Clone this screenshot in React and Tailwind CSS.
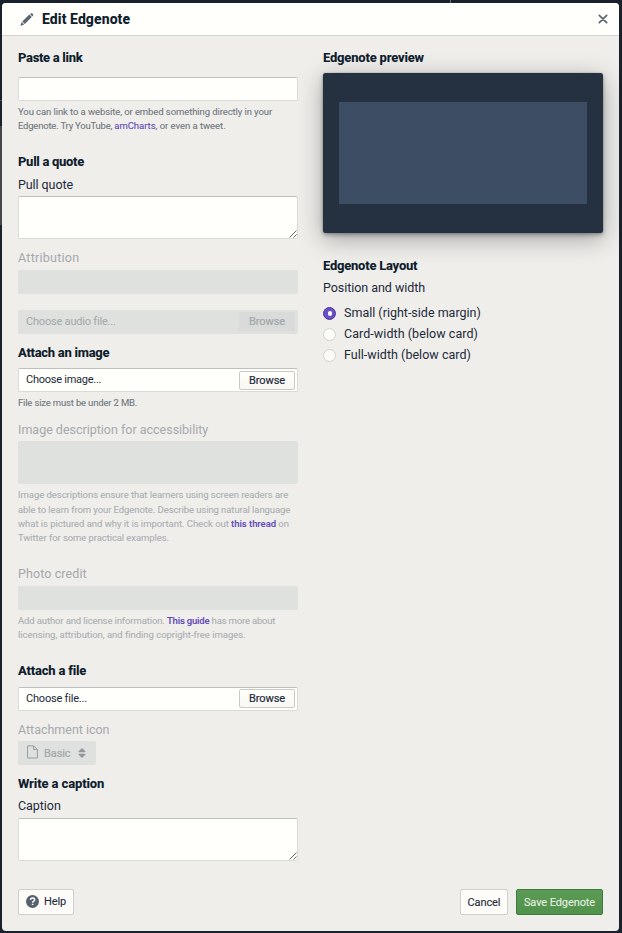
import React from "react";

const cx = (...c) => c.filter(Boolean).join(" ");

function Heading({ children, className }) {
  return <h2 className={cx("h-5 text-[13px] leading-5 font-extrabold text-[#0f1d2e] whitespace-nowrap", className)}>{children}</h2>;
}

function Label({ children, className, disabled }) {
  return (
    <div className={cx("h-[18px] text-[12.5px] leading-[18px] whitespace-nowrap", disabled ? "text-[#a5a9ad]" : "text-[#1c2a3a]", className)}>
      {children}
    </div>
  );
}

function HelpLine({ children, className, disabled }) {
  return (
    <div className={cx("text-[9.5px] leading-[14px] whitespace-nowrap [-webkit-text-stroke:0.1px]", disabled ? "text-[#aaafb2]" : "text-[#6f7881]", className)}>
      {children}
    </div>
  );
}

function Link({ children, className }) {
  return <a className={cx("text-[#6249b8]", className)}>{children}</a>;
}

const fieldLook = "rounded-[2px] border border-[#dadbd8] border-t-[#bfc0be] bg-[#fffffb]";

function TextArea({ className }) {
  return (
    <div className={cx("h-[43px] flex items-end justify-end", fieldLook, className)}>
      <svg width="8" height="8" viewBox="0 0 8 8" stroke="#55585a" strokeWidth="0.9" fill="none">
        <path d="M0.5 7.5 L7.5 0.5 M4.5 7.5 L7.5 4.5" />
      </svg>
    </div>
  );
}

function FileInput({ text, textClass, disabled, className, raised }) {
  return (
    <div
      className={cx(
        "h-6 flex items-start justify-between pl-[7px] pr-[2px] text-[11px]",
        disabled ? "rounded-[2px] border border-transparent bg-[#dfe1de] text-[#a0a7a9]" : cx(fieldLook, "text-[#1c2a3a]"),
        className
      )}
    >
      <span className={cx("mt-1 leading-[14px] whitespace-nowrap", textClass)}>{text}</span>
      <span
        className={cx(
          "h-[19px] w-14 rounded-[2px] border text-center leading-[17px] tracking-[-0.1px] [-webkit-text-stroke:0.2px]",
          raised ? "mt-[2px]" : "mt-px",
          disabled ? "border-transparent bg-[#d8dbd9]" : "border-[#cacbc8] bg-linear-to-b from-[#fffffc] to-[#f8f7f4]"
        )}
      >
        Browse
      </span>
    </div>
  );
}

function Radio({ children, checked, className }) {
  return (
    <div className="flex h-[21px] items-center">
      <span
        className={cx(
          "flex size-[13px] shrink-0 items-center justify-center rounded-full border",
          checked ? "border-[#4b3a97] bg-[#6a50c7]" : "border-[#d2d2cf] bg-[#fbfbf8]"
        )}
      >
        {checked && <span className="h-[5px] w-1 rounded-full bg-white" />}
      </span>
      <span className={cx("ml-2 pb-[2px] text-[12.5px] leading-[18px] whitespace-nowrap text-[#1c2a3a]", className)}>{children}</span>
    </div>
  );
}

export default function App() {
  return (
    <div className="h-[933px] w-[622px] overflow-hidden bg-[#18212c] bg-[linear-gradient(#454748,#454748),linear-gradient(#6c7070,#6c7070),linear-gradient(#4a5058,#4a5058)] bg-[length:2px_99px,1px_3px,2px_1px] bg-[position:0_126px,450px_0,0_100px] bg-no-repeat pt-[3px] pr-[3px] pb-[2px] pl-[2px] font-['Roboto','Liberation_Sans',sans-serif]">
      <div className="flex h-[928px] flex-col overflow-hidden rounded-[4px] bg-[#f0eeeb]">
        <header className="flex h-[33px] shrink-0 items-center border-b border-[#d3d3d0] bg-[#fffffb] pr-[11px] pl-[18px]">
          <svg width="14" height="14" viewBox="0 0 14 14" fill="#5c6672" className="mt-px">
            <path d="M10.1 1 L11.2 .3 Q12 0 12.9 .9 Q13.7 1.9 13.1 2.6 L12.2 3.4 Z M9.3 1.6 L11.8 4.1 L4.7 10.9 L2.3 8.5 Z M1.7 9 L4.2 11.4 L.4 12.9 Z" />
          </svg>
          <h1 className="ml-2 -mt-px grow text-[14px] leading-5 font-extrabold tracking-[0.09px] text-[#0f1d2e]">Edit Edgenote</h1>
          <svg width="10" height="10" viewBox="0 0 10 10" stroke="#5c6672" strokeWidth="1.7" strokeLinecap="round">
            <path d="M1.3 1.3 L8.7 8.7 M8.7 1.3 L1.3 8.7" />
          </svg>
        </header>

        <main className="flex gap-[25px] px-4 pt-3">
          <section className="w-[280px]">
            <Heading className="tracking-[-0.32px]">Paste a link</Heading>
            <div className={cx("mt-[9px] h-6", fieldLook)} />
            <HelpLine className="mt-1 tracking-[-0.09px]">You can link to a website, or embed something directly in your</HelpLine>
            <HelpLine className="tracking-[-0.04px]">
              <span className="tracking-[-0.21px]">Edgenote. Try YouTube, </span><Link>amCharts</Link>, or even a tweet.
            </HelpLine>

            <Heading className="mt-[19px] tracking-[-0.3px]">Pull a quote</Heading>
            <Label className="mt-1 tracking-[-0.08px]">Pull quote</Label>
            <TextArea className="mt-[2px]" />
            <Label disabled className="mt-[10px] tracking-[0.25px]">Attribution</Label>
            <div className="mt-[3px] h-6 rounded-[2px] bg-[#dfe1de]" />
            <FileInput disabled text="Choose audio file..." textClass="tracking-[-0.2px]" className="mt-4" />

            <Heading className="mt-[9px] tracking-[-0.28px]">Attach an image</Heading>
            <FileInput raised text="Choose image..." textClass="tracking-[-0.25px]" className="mt-[5px]" />
            <HelpLine className="mt-1 tracking-[-0.17px]">File size must be under 2 MB.</HelpLine>
            <Label disabled className="mt-[11px] tracking-[-0.01px]">Image description for accessibility</Label>
            <div className="mt-[2px] h-[43px] rounded-[2px] bg-[#dfe1de]" />
            <HelpLine disabled className="mt-1 tracking-[-0.05px]">Image descriptions ensure that learners using screen readers are</HelpLine>
            <HelpLine disabled className="mt-px tracking-[-0.08px]">able to learn from your Edgenote. Describe using natural language</HelpLine>
            <HelpLine disabled className="tracking-[-0.04px]">
              what is pictured and why it is important. Check out <Link className="font-medium">this thread</Link> on
            </HelpLine>
            <HelpLine disabled className="tracking-[-0.09px]">Twitter for some practical examples.</HelpLine>

            <Label disabled className="mt-[20px] tracking-[0.1px]">Photo credit</Label>
            <div className="mt-[3px] h-6 rounded-[2px] bg-[#dfe1de]" />
            <HelpLine disabled className="mt-1 tracking-[-0.18px]">
              <span className="tracking-[-0.12px]">Add author and license information. </span><Link className="font-medium">This guide</Link> has more about
            </HelpLine>
            <HelpLine disabled className="tracking-[-0.03px]">licensing, attribution, and finding copright-free images.</HelpLine>

            <Heading className="mt-[19px] tracking-[-0.2px]">Attach a file</Heading>
            <FileInput text="Choose file..." textClass="tracking-[-0.2px]" className="mt-[6px]" />
            <Label disabled className="mt-[10px] tracking-[-0.02px]">Attachment icon</Label>
            <div className="mt-[2px] flex h-6 w-[78px] items-center rounded-[2px] bg-[#dfe1de] pl-[9px] text-[#a0a7a9]">
              <svg width="11" height="14" viewBox="0 0 11 14" fill="none" stroke="#949ca1" className="-mt-[3px]">
                <path d="M.6 .9 H6.6 L10.4 4.7 V13 H.6 Z M6.6 .9 V4.7 H10.4" />
              </svg>
              <span className="mt-[2px] ml-[6px] w-[26px] text-[11px] leading-[18px] tracking-[-0.1px] [-webkit-text-stroke:0.2px]">Basic</span>
              <svg width="8" height="10" viewBox="0 0 8 10" fill="#8f979d" className="ml-2">
                <path d="M4 0 L7.3 3.3 Q7.8 4.2 7 4.2 H1 Q.2 4.2 .7 3.3 Z M4 10 L7.3 6.7 Q7.8 5.8 7 5.8 H1 Q.2 5.8 .7 6.7 Z" />
              </svg>
            </div>

            <Heading className="mt-[9px] tracking-[-0.12px]">Write a caption</Heading>
            <Label className="mt-[3px] tracking-[-0.05px]">Caption</Label>
            <TextArea className="mt-[3px]" />
          </section>

          <section className="w-[280px]">
            <Heading className="tracking-[-0.2px]">Edgenote preview</Heading>
            <div className="mt-[5px] h-40 rounded-[3px] bg-[#253041] px-4 py-[29px] shadow-[0_0_1px_rgba(16,22,26,0.5),0_2px_4px_rgba(16,22,26,0.35),0_6px_24px_rgba(16,22,26,0.35)]">
              <div className="h-[102px] rounded-[1px] bg-[#3d4d63]" />
            </div>
            <Heading className="mt-[23px] tracking-[-0.24px]">Edgenote Layout</Heading>
            <Label className="mt-[3px] tracking-[-0.05px]">Position and width</Label>
            <div className="mt-[6px]">
              <Radio checked>Small (right-side margin)</Radio>
              <Radio className="tracking-[0.06px]">Card-width (below card)</Radio>
              <Radio className="tracking-[0.03px]">Full-width (below card)</Radio>
            </div>
          </section>
        </main>

        <footer className="mt-7 flex h-[26px] items-stretch px-4 text-[11px] leading-6 [-webkit-text-stroke:0.1px]">
          <button className="flex w-14 items-center rounded-[2px] border border-[#cfcfcc] bg-[#fdfcf9] pl-[7px] text-[#1c2a3a]">
            <svg width="13" height="13" viewBox="0 0 13 13" className="-mt-px">
              <circle cx="6.5" cy="6.5" r="6.5" fill="#56616e" />
              <path d="M4.5 4.9 Q4.6 3.1 6.6 3.1 Q8.6 3.1 8.6 4.8 Q8.6 5.7 7.5 6.3 Q6.6 6.8 6.6 7.7" fill="none" stroke="#fff" strokeWidth="1.5" />
              <path d="M5.8 8.7 H7.4 V10.1 H5.8 Z" fill="#fff" />
            </svg>
            <span className="ml-[5px] tracking-[-0.15px]">Help</span>
          </button>
          <button className="ml-auto w-12 rounded-[2px] border border-[#cfcfcc] bg-[#fdfcf9] pt-px tracking-[-0.1px] text-[#1c2a3a]">Cancel</button>
          <button className="ml-2 w-[87px] rounded-[2px] border border-[#3d7a3b] bg-linear-to-b from-[#5c9b57] to-[#50914b] pt-px tracking-[-0.1px] whitespace-nowrap text-[#e6f0e2]">Save Edgenote</button>
        </footer>
      </div>
    </div>
  );
}
